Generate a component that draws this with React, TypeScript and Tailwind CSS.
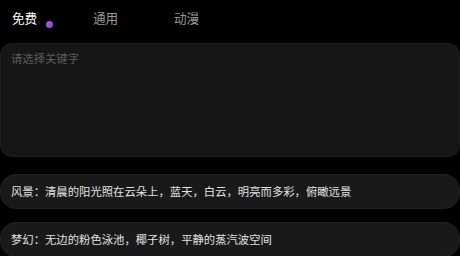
const tabs = ["免费", "通用", "动漫"];

const prompts = [
  "风景：清晨的阳光照在云朵上，蓝天，白云，明亮而多彩，俯瞰远景",
  "梦幻：无边的粉色泳池，椰子树，平静的蒸汽波空间",
];

export default function App() {
  return (
    <div
      className="w-[460px] h-[256px] overflow-hidden bg-black"
      style={{ fontFamily: '"Noto Sans CJK SC", "Noto Sans", sans-serif' }}
    >
      <div className="flex items-center h-[43px] pl-[12px] pb-[6px]">
        {tabs.map((t, i) => (
          <div key={t} className="w-[81px] flex items-center">
            <span className={`text-[12.6px] leading-none ${i === 0 ? "text-white" : "text-[#9a9a9a]"}`}>
              {t}
            </span>
            {i === 0 && (
              <span className="ml-[9px] mt-[11px] w-[7px] h-[7px] rounded-full bg-gradient-to-br from-[#e03ad0] to-[#5b4cf0]" />
            )}
          </div>
        ))}
      </div>

      <div className="h-[114px] rounded-[12px] bg-[#161616] border border-[#1e1e1e] px-[10px] pt-[6px]">
        <div className="text-[11.35px] text-[#5c5c5c]">请选择关键字</div>
      </div>

      <div className="mt-[17px] flex flex-col gap-[13px]">
        {prompts.map((p) => (
          <div
            key={p}
            className="h-[35px] flex items-center px-[10px] rounded-[16px] bg-[#191919] border border-[#222]"
          >
            <span className="text-[11.35px] text-[#e2e2e2] whitespace-nowrap">{p}</span>
          </div>
        ))}
      </div>
    </div>
  );
}
